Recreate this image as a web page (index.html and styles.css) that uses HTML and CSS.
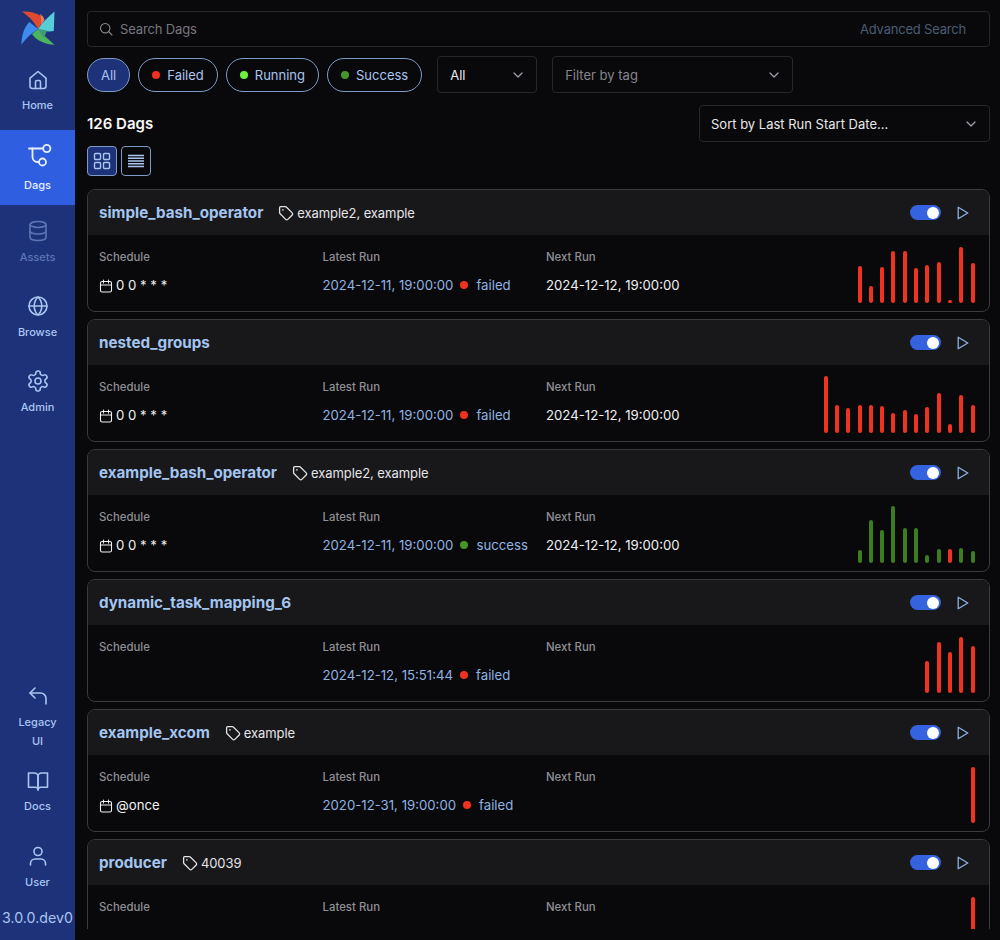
FILE: index.html
```html
<!DOCTYPE html>
<html lang="en">
<head>
<meta charset="utf-8">
<title>Dags</title>
<link rel="stylesheet" href="styles.css">
</head>
<body>
<svg class="defs" width="0" height="0" aria-hidden="true">
  <symbol id="i-tag" viewBox="0 0 16 16"><path d="M1.6 2.7c0-.6.5-1.1 1.1-1.1h4.6c.4 0 .8.2 1 .4l5.9 5.9c.6.6.6 1.5 0 2.1l-4.4 4.4c-.6.6-1.5.6-2.1 0L1.9 8.5c-.2-.2-.3-.6-.3-1z" fill="none" stroke="currentColor" stroke-width="1.3"/><circle cx="4.9" cy="4.9" r=".8" fill="currentColor"/></symbol>
  <symbol id="i-cal" viewBox="0 0 14 14"><rect x="1.5" y="2.5" width="11" height="10.5" rx="1.6" fill="none" stroke="currentColor" stroke-width="1.1"/><path d="M1.5 6h11M4.5 1v3M9.5 1v3" fill="none" stroke="currentColor" stroke-width="1.1" stroke-linecap="round"/></symbol>
  <symbol id="i-play" viewBox="0 0 12 14"><path d="M1.2 1.3v11.4L10.8 7z" fill="none" stroke="currentColor" stroke-width="1.3" stroke-linejoin="round"/></symbol>
  <symbol id="i-chev" viewBox="0 0 12 12"><path d="M2 4l4 4 4-4" fill="none" stroke="currentColor" stroke-width="1.2" stroke-linecap="round" stroke-linejoin="round"/></symbol>
</svg>
<div class="app">
  <nav class="sidebar">
    <div class="logo">
      <svg width="38" height="38" viewBox="19 8 38 38" aria-label="Airflow">
        <path d="M22 10.5C30 10 40 12 44.5 19L38 28C34 20 29 16 22 10.5Z" fill="#dc4a2f"/>
        <path d="M40 12.8C42 14 43.8 16.5 44.5 19L41 24C41.5 20 41 16 40 12.8Z" fill="#ec7a5c"/>
        <path d="M54.5 10.5L53.8 30C49 31 43 30 38 28C42 22 48 16 54.5 10.5Z" fill="#57cdd8"/>
        <path d="M54.5 43.8C46 43.5 36 39.5 32 33L38 28C42 33 48 38 54.5 43.8Z" fill="#4cb45f"/>
        <path d="M44 37C42 35 40 31 38 28L47 29.5C46 32 45 35 44 37Z" fill="#3e9a7a"/>
        <path d="M21.5 43.5C21.5 35 24 26 29.5 21L38 28C32 32 26 37 21.5 43.5Z" fill="#3d8bef"/>
      </svg>
    </div>
    <a class="item home">
      <svg class="ic" viewBox="0 0 24 24"><path d="M4 10.2L12 3.5l8 6.7V18a2.5 2.5 0 0 1-2.500 2.500h-11A2.500 2.500 0 0 1 4 18z"/><path d="M9.500 20.500V14a1.500 1.500 0 0 1 1.500-1.500h2a1.500 1.500 0 0 1 1.500 1.500v6.500"/></svg>
      <span>Home</span>
    </a>
    <a class="item active">
      <svg class="ic big" viewBox="0 0 32 32"><path d="M7 8.500h14"/><path d="M10.500 8.500V17a5 5 0 0 0 5 5H17"/><circle cx="24.800" cy="8.500" r="3.600"/><circle cx="20.500" cy="22" r="3.500"/></svg>
      <span>Dags</span>
    </a>
    <a class="item dim">
      <svg class="ic" viewBox="0 0 24 24"><ellipse cx="12" cy="5.500" rx="8" ry="3"/><path d="M4 5.500v13c0 1.700 3.600 3 8 3s8-1.300 8-3v-13"/><path d="M4 12c0 1.700 3.600 3 8 3s8-1.300 8-3"/></svg>
      <span>Assets</span>
    </a>
    <a class="item">
      <svg class="ic" viewBox="0 0 24 24"><circle cx="12" cy="12" r="9"/><path d="M3 12h18"/><path d="M12 3c2.500 2.500 3.800 5.600 3.800 9s-1.300 6.500-3.800 9c-2.500-2.500-3.800-5.600-3.800-9S9.500 5.500 12 3z"/></svg>
      <span>Browse</span>
    </a>
    <a class="item">
      <svg class="ic" viewBox="0 0 24 24"><path d="M12.220 2h-.44a2 2 0 0 0-2 2v.18a2 2 0 0 1-1 1.730l-.43.250a2 2 0 0 1-2 0l-.15-.08a2 2 0 0 0-2.730.730l-.22.380a2 2 0 0 0 .730 2.730l.15.100a2 2 0 0 1 1 1.720v.510a2 2 0 0 1-1 1.740l-.15.090a2 2 0 0 0-.730 2.730l.22.380a2 2 0 0 0 2.730.730l.15-.08a2 2 0 0 1 2 0l.43.250a2 2 0 0 1 1 1.730V20a2 2 0 0 0 2 2h.44a2 2 0 0 0 2-2v-.18a2 2 0 0 1 1-1.730l.43-.25a2 2 0 0 1 2 0l.15.08a2 2 0 0 0 2.730-.73l.22-.39a2 2 0 0 0-.73-2.730l-.15-.08a2 2 0 0 1-1-1.740v-.5a2 2 0 0 1 1-1.740l.15-.09a2 2 0 0 0 .73-2.730l-.22-.38a2 2 0 0 0-2.730-.73l-.15.08a2 2 0 0 1-2 0l-.43-.25a2 2 0 0 1-1-1.730V4a2 2 0 0 0-2-2z"/><circle cx="12" cy="12" r="3"/></svg>
      <span>Admin</span>
    </a>
    <div class="spacer"></div>
    <a class="item legacy">
      <svg class="ic" viewBox="0 0 24 24"><path d="M9 14L4 9l5-5"/><path d="M4 9h10.500A5.500 5.500 0 0 1 20 14.500V20"/></svg>
      <span>Legacy UI</span>
    </a>
    <a class="item docs">
      <svg class="ic" viewBox="0 0 24 24"><path d="M2.500 4h6a3.500 3.500 0 0 1 3.500 3.500V21a2.800 2.800 0 0 0-2.800-2.800H2.500z"/><path d="M21.500 4h-6A3.500 3.500 0 0 0 12 7.500V21a2.800 2.800 0 0 1 2.800-2.800h6.700z"/></svg>
      <span>Docs</span>
    </a>
    <a class="item">
      <svg class="ic" viewBox="0 0 24 24"><circle cx="12" cy="7.500" r="4"/><path d="M4.500 21v-1.500A4.500 4.500 0 0 1 9 15h6a4.500 4.500 0 0 1 4.500 4.500V21"/></svg>
      <span>User</span>
    </a>
    <div class="version">3.0.0.dev0</div>
  </nav>

  <main class="main">
    <div class="search">
      <svg class="search-ic" width="14" height="14" viewBox="0 0 14 14"><circle cx="6.200" cy="6.200" r="4.700" fill="none" stroke="currentColor" stroke-width="1.100"/><path d="M9.700 9.700L13 13" stroke="currentColor" stroke-width="1.100" stroke-linecap="round"/></svg>
      <span class="placeholder">Search Dags</span>
      <span class="advanced">Advanced Search</span>
    </div>

    <div class="filters">
      <div class="pills">
        <button class="pill selected">All</button>
        <button class="pill"><i class="dot red"></i>Failed</button>
        <button class="pill"><i class="dot lime"></i>Running</button>
        <button class="pill"><i class="dot green"></i>Success</button>
      </div>
      <div class="select paused"><span>All</span><svg width="12" height="12"><use href="#i-chev"/></svg></div>
      <div class="select tagfilter"><span class="muted">Filter by tag</span><svg width="12" height="12"><use href="#i-chev"/></svg></div>
    </div>

    <div class="countrow">
      <h1 class="count">126 Dags</h1>
      <div class="select sort"><span>Sort by Last Run Start Date...</span><svg width="12" height="12"><use href="#i-chev"/></svg></div>
    </div>

    <div class="views">
      <button class="view selected"><svg width="18" height="18" viewBox="0 0 18 18"><rect x="1.500" y="1.500" width="6" height="6" rx="1"/><rect x="10.500" y="1.500" width="6" height="6" rx="1"/><rect x="1.500" y="10.500" width="6" height="6" rx="1"/><rect x="10.500" y="10.500" width="6" height="6" rx="1"/></svg></button>
      <button class="view"><svg width="16" height="14" viewBox="0 0 16 14"><path d="M0 1.500h16M0 4.250h16M0 7h16M0 9.750h16M0 12.500h16"/></svg></button>
    </div>

    <div class="list">
      <article class="card">
        <header class="card-head">
          <a class="title">simple_bash_operator</a>
          <span class="tags"><svg width="16" height="16"><use href="#i-tag"/></svg>example2, example</span>
          <span class="actions"><span class="toggle"><i></i></span><svg class="play" width="12" height="14"><use href="#i-play"/></svg></span>
        </header>
        <div class="card-body">
          <div class="cell"><div class="label">Schedule</div><div class="value"><svg width="14" height="14"><use href="#i-cal"/></svg>0 0 * * *</div></div>
          <div class="cell"><div class="label">Latest Run</div><div class="value run"><a>2024-12-11, 19:00:00</a><i class="dot red"></i><span>failed</span></div></div>
          <div class="cell"><div class="label">Next Run</div><div class="value">2024-12-12, 19:00:00</div></div>
          <div class="bars">
            <i class="bar r" style="height:37px"></i><i class="bar r" style="height:17px"></i><i class="bar r" style="height:36px"></i><i class="bar r" style="height:52px"></i><i class="bar r" style="height:52px"></i><i class="bar r" style="height:35px"></i><i class="bar r" style="height:38px"></i><i class="bar r" style="height:41px"></i><i class="bar r" style="height:3px"></i><i class="bar r" style="height:56px"></i><i class="bar r" style="height:40px"></i>
          </div>
        </div>
      </article>

      <article class="card">
        <header class="card-head">
          <a class="title">nested_groups</a>
          <span class="actions"><span class="toggle"><i></i></span><svg class="play" width="12" height="14"><use href="#i-play"/></svg></span>
        </header>
        <div class="card-body">
          <div class="cell"><div class="label">Schedule</div><div class="value"><svg width="14" height="14"><use href="#i-cal"/></svg>0 0 * * *</div></div>
          <div class="cell"><div class="label">Latest Run</div><div class="value run"><a>2024-12-11, 19:00:00</a><i class="dot red"></i><span>failed</span></div></div>
          <div class="cell"><div class="label">Next Run</div><div class="value">2024-12-12, 19:00:00</div></div>
          <div class="bars">
            <i class="bar r" style="height:57px"></i><i class="bar r" style="height:28px"></i><i class="bar r" style="height:25px"></i><i class="bar r" style="height:28px"></i><i class="bar r" style="height:28px"></i><i class="bar r" style="height:27px"></i><i class="bar r" style="height:20px"></i><i class="bar r" style="height:23px"></i><i class="bar r" style="height:19px"></i><i class="bar r" style="height:26px"></i><i class="bar r" style="height:40px"></i><i class="bar r" style="height:9px"></i><i class="bar r" style="height:38px"></i><i class="bar r" style="height:28px"></i>
          </div>
        </div>
      </article>

      <article class="card">
        <header class="card-head">
          <a class="title">example_bash_operator</a>
          <span class="tags"><svg width="16" height="16"><use href="#i-tag"/></svg>example2, example</span>
          <span class="actions"><span class="toggle"><i></i></span><svg class="play" width="12" height="14"><use href="#i-play"/></svg></span>
        </header>
        <div class="card-body">
          <div class="cell"><div class="label">Schedule</div><div class="value"><svg width="14" height="14"><use href="#i-cal"/></svg>0 0 * * *</div></div>
          <div class="cell"><div class="label">Latest Run</div><div class="value run"><a>2024-12-11, 19:00:00</a><i class="dot green"></i><span>success</span></div></div>
          <div class="cell"><div class="label">Next Run</div><div class="value">2024-12-12, 19:00:00</div></div>
          <div class="bars">
            <i class="bar g" style="height:13px"></i><i class="bar g" style="height:43px"></i><i class="bar g" style="height:33px"></i><i class="bar g" style="height:57px"></i><i class="bar g" style="height:35px"></i><i class="bar g" style="height:35px"></i><i class="bar g" style="height:8px"></i><i class="bar g" style="height:14px"></i><i class="bar r" style="height:14px"></i><i class="bar g" style="height:15px"></i><i class="bar g" style="height:12px"></i>
          </div>
        </div>
      </article>

      <article class="card">
        <header class="card-head">
          <a class="title">dynamic_task_mapping_6</a>
          <span class="actions"><span class="toggle"><i></i></span><svg class="play" width="12" height="14"><use href="#i-play"/></svg></span>
        </header>
        <div class="card-body">
          <div class="cell"><div class="label">Schedule</div><div class="value"></div></div>
          <div class="cell"><div class="label">Latest Run</div><div class="value run"><a>2024-12-12, 15:51:44</a><i class="dot red"></i><span>failed</span></div></div>
          <div class="cell"><div class="label">Next Run</div><div class="value"></div></div>
          <div class="bars">
            <i class="bar r" style="height:32px"></i><i class="bar r" style="height:51px"></i><i class="bar r" style="height:41px"></i><i class="bar r" style="height:56px"></i><i class="bar r" style="height:47px"></i>
          </div>
        </div>
      </article>

      <article class="card">
        <header class="card-head">
          <a class="title">example_xcom</a>
          <span class="tags"><svg width="16" height="16"><use href="#i-tag"/></svg>example</span>
          <span class="actions"><span class="toggle"><i></i></span><svg class="play" width="12" height="14"><use href="#i-play"/></svg></span>
        </header>
        <div class="card-body">
          <div class="cell"><div class="label">Schedule</div><div class="value"><svg width="14" height="14"><use href="#i-cal"/></svg>@once</div></div>
          <div class="cell"><div class="label">Latest Run</div><div class="value run"><a>2020-12-31, 19:00:00</a><i class="dot red"></i><span>failed</span></div></div>
          <div class="cell"><div class="label">Next Run</div><div class="value"></div></div>
          <div class="bars">
            <i class="bar r" style="height:56px"></i>
          </div>
        </div>
      </article>

      <article class="card">
        <header class="card-head">
          <a class="title">producer</a>
          <span class="tags"><svg width="16" height="16"><use href="#i-tag"/></svg>40039</span>
          <span class="actions"><span class="toggle"><i></i></span><svg class="play" width="12" height="14"><use href="#i-play"/></svg></span>
        </header>
        <div class="card-body">
          <div class="cell"><div class="label">Schedule</div><div class="value"></div></div>
          <div class="cell"><div class="label">Latest Run</div><div class="value"></div></div>
          <div class="cell"><div class="label">Next Run</div><div class="value"></div></div>
          <div class="bars">
            <i class="bar r" style="height:56px"></i>
          </div>
        </div>
      </article>
    </div>
  </main>
</div>
</body>
</html>
```
FILE: styles.css
```css
* { box-sizing: border-box; }
html, body { margin: 0; height: 100%; }
body {
  background: #09090b;
  color: #f4f4f5;
  font-family: Inter, "Liberation Sans", sans-serif;
  font-size: 13px;
  line-height: 20px;
  overflow: hidden;
}
.defs { position: absolute; }
.app { display: flex; height: 940px; }

/* Sidebar */
.sidebar {
  width: 75px;
  flex: none;
  background: #1e327a;
  color: #a9c5f0;
  display: flex;
  flex-direction: column;
}
.logo { height: 53px; display: flex; justify-content: center; padding-top: 9px; }
.item {
  height: 75px;
  padding-top: 13.5px;
  display: flex;
  flex-direction: column;
  align-items: center;
  gap: 5px;
  font-size: 11px;
  line-height: 18px;
  font-weight: 500;
  text-align: center;
}
.item span { display: block; width: 60px; }
.home { height: 77px; padding-top: 14.5px; gap: 4px; }
.active { background: #2f5fe0; color: #e8f0ff; padding-top: 9.5px; gap: 4px; }
.dim { color: #5c76b2; }
.legacy { height: 85px; line-height: 19px; }
.legacy span { width: 50px; }
.docs { gap: 4px; }
.ic {
  width: 24px;
  height: 24px;
  flex: none;
  fill: none;
  stroke: currentColor;
  stroke-width: 1.6;
  stroke-linecap: round;
  stroke-linejoin: round;
}
.ic.big { width: 32px; height: 32px; stroke-width: 1.800; }
.spacer { flex: 1; }
.version { height: 35px; font-size: 14.200px; line-height: 26px; text-align: center; white-space: nowrap; }

/* Main */
.main {
  flex: 1;
  min-width: 0;
  padding: 11px 10px 11px 12px;
  display: flex;
  flex-direction: column;
}
.search {
  height: 36px;
  flex: none;
  border: 1px solid #27272a;
  border-radius: 4px;
  display: flex;
  align-items: center;
  padding: 0 23px 0 11px;
}
.search-ic { color: #8a8a90; margin-right: 7px; }
.placeholder { color: #77777e; flex: 1; letter-spacing: -.15px; }
.advanced { color: #4b5c75; letter-spacing: -.2px; }

.filters { display: flex; align-items: center; margin-top: 9px; height: 37px; flex: none; }
.pills { display: flex; gap: 8px; margin-right: 15px; }
.pill {
  height: 34px;
  padding: 0 13px;
  border: 1.5px solid #7e9bc6;
  border-radius: 17px;
  background: transparent;
  color: #a9c5f0;
  font: inherit;
  display: flex;
  align-items: center;
  gap: 7px;
}
.pill.selected { background: #1e327a; }
.dot { display: inline-block; width: 8px; height: 8px; border-radius: 50%; flex: none; }
.red { background: #f03020; }
.lime { background: #6ef23a; }
.green { background: #45962a; }

.select {
  height: 37px;
  border: 1px solid #27272a;
  border-radius: 4px;
  display: flex;
  align-items: center;
  justify-content: space-between;
  padding: 0 12px;
  flex: none;
  color: #e8e8ea;
}
.select svg { color: #a1a1aa; }
.paused { width: 100px; margin-right: 15px; }
.tagfilter { width: 241px; }
.muted { color: #85858c; }
.sort { width: 291px; padding-left: 11px; }

.countrow { display: flex; justify-content: space-between; align-items: center; margin-top: 12px; flex: none; }
.count { margin: 0; padding-top: 1px; font-size: 15px; font-weight: 600; line-height: 24px; color: #fafafa; }

.views { display: flex; gap: 4px; margin-top: 4px; flex: none; }
.view {
  width: 30px;
  height: 30px;
  padding: 0;
  border: 1.5px solid #7e9bc6;
  border-radius: 4px;
  background: transparent;
  display: flex;
  align-items: center;
  justify-content: center;
}
.view.selected { background: #1e327a; }
.view svg { fill: none; stroke: #a9c5f0; stroke-width: 1.400; }

/* Cards */
.list { flex: 1; min-height: 0; margin-top: 13px; overflow: hidden; display: flex; flex-direction: column; gap: 7px; }
.card {
  flex: none;
  height: 123px;
  border: 1px solid #3a3a3f;
  border-radius: 8px;
  overflow: hidden;
}
.card-head {
  height: 45px;
  background: #18181b;
  display: flex;
  align-items: center;
  padding: 0 11px;
}
.title { font-size: 15.200px; font-weight: 700; color: #a3c5f0; line-height: 25px; }
.tags { display: flex; align-items: center; gap: 3px; margin-left: 15px; color: #e4e4e7; letter-spacing: -.08px; }
.actions { margin-left: auto; display: flex; align-items: center; gap: 16px; padding-right: 9px; }
.toggle {
  width: 31px;
  height: 15px;
  border-radius: 8px;
  background: #3563e0;
  display: flex;
  justify-content: flex-end;
  align-items: center;
  padding-right: 2px;
}
.toggle i { width: 12px; height: 12px; border-radius: 50%; background: #fff; }
.play { color: #8cb0e0; }

.card-body {
  height: 76px;
  padding: 12px 12px 8px 11px;
  display: grid;
  grid-template-columns: repeat(4, minmax(0, 1fr));
  column-gap: 16px;
}
.cell { display: flex; flex-direction: column; gap: 8px; }
.label { font-size: 11.400px; font-weight: 500; color: #8f8f96; }
.value { display: flex; align-items: center; height: 20px; font-size: 13.200px; color: #f0f0f2; white-space: nowrap; }
.value svg { margin: 2px 3px 0 0; flex: none; }
.run { color: #8fb3e2; }
.run .dot { margin: 0 8px 0 7px; }
.bars {
  display: flex;
  justify-content: flex-end;
  align-items: flex-end;
  gap: 7.300px;
  height: 56px;
  padding-right: 2.500px;
}
.bar { width: 4px; flex: none; border-radius: 2px; display: block; }
.bar.r { background: #ef3320; }
.bar.g { background: #3b7d1f; }
```
